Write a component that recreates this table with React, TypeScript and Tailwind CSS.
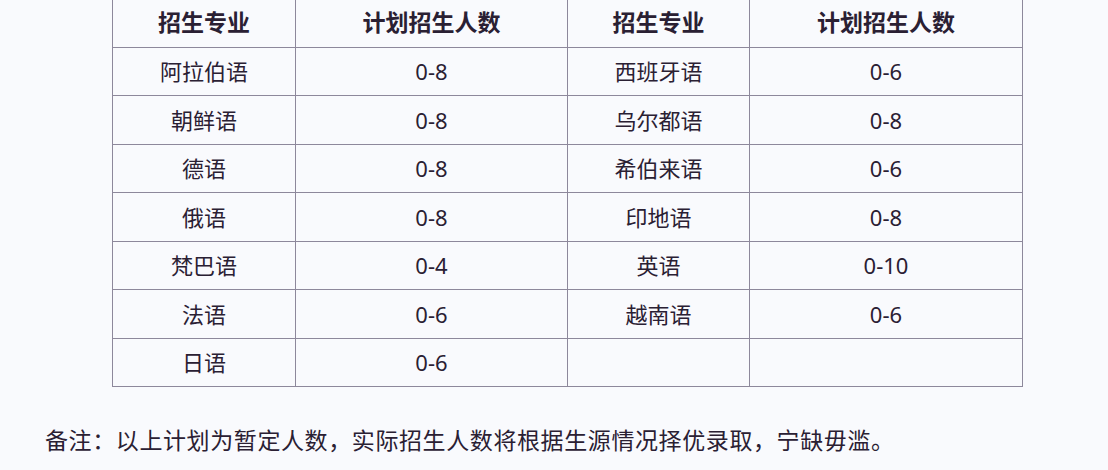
const rows: [string, string, string, string][] = [
  ["阿拉伯语", "0-8", "西班牙语", "0-6"],
  ["朝鲜语", "0-8", "乌尔都语", "0-8"],
  ["德语", "0-8", "希伯来语", "0-6"],
  ["俄语", "0-8", "印地语", "0-8"],
  ["梵巴语", "0-4", "英语", "0-10"],
  ["法语", "0-6", "越南语", "0-6"],
  ["日语", "0-6", "", ""],
];

const font = { fontFamily: '"Noto Sans", "Noto Sans CJK SC", sans-serif' };

export default function App() {
  return (
    <main className="h-[470px] w-[1108px] overflow-hidden bg-[#f9fafd] text-[#2a2033]" style={font}>
      <div className="-mt-[3px] pl-[112px]">
        <table className="border-collapse text-center text-[22px]">
          <colgroup>
            <col className="w-[183px]" />
            <col className="w-[272px]" />
            <col className="w-[182px]" />
            <col className="w-[273px]" />
          </colgroup>
          <thead>
            <tr className="h-[49.5px]">
              {["招生专业", "计划招生人数", "招生专业", "计划招生人数"].map((h, i) => (
                <th key={i} className="border border-[#8d889b] text-[23px] font-bold leading-none">
                  {h}
                </th>
              ))}
            </tr>
          </thead>
          <tbody>
            {rows.map((r, i) => (
              <tr key={i} className="h-[48.5px]">
                {r.map((c, j) => (
                  <td key={j} className="border border-[#8d889b] p-0 leading-none">
                    {c}
                  </td>
                ))}
              </tr>
            ))}
          </tbody>
        </table>
      </div>
      <p className="mt-[42px] pl-[45px] text-[23px] leading-none tracking-[0.6px]">
        备注：以上计划为暂定人数，实际招生人数将根据生源情况择优录取，宁缺毋滥。
      </p>
    </main>
  );
}
